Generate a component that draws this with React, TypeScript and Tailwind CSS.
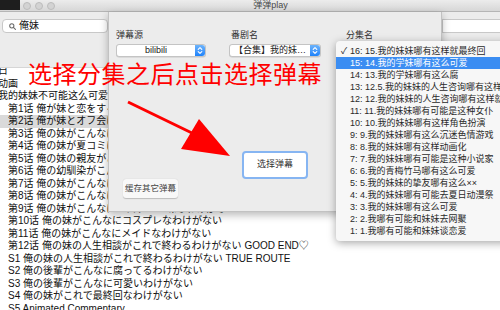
import React from "react";

const listRows: { text: string; indent?: boolean; selected?: boolean }[] = [
  { text: "日" },
  { text: "动画" },
  { text: "我的妹妹不可能这么可爱" },
  { text: "第1话 俺が妹と恋をするわけがない", indent: true },
  { text: "第2话 俺が妹とオフ会に行くわけがない", indent: true, selected: true },
  { text: "第3话 俺の妹がこんなに可愛いわけがない", indent: true },
  { text: "第4话 俺の妹が夏コミに行くわけがない", indent: true },
  { text: "第5话 俺の妹の親友がこんなに可愛いわけがない", indent: true },
  { text: "第6话 俺の幼馴染がこんなに可愛いわけがない", indent: true },
  { text: "第7话 俺の妹がこんなに小説家なわけがない", indent: true },
  { text: "第8话 俺の妹がこんなにアニメ化なわけがない", indent: true },
  { text: "第9话 俺の妹がこんなにエロゲー三昧なわけがない", indent: true },
  { text: "第10话 俺の妹がこんなにコスプレなわけがない", indent: true },
  { text: "第11话 俺の妹がこんなにメイドなわけがない", indent: true },
  { text: "第12话 俺の妹の人生相談がこれで終わるわけがない GOOD END♡", indent: true },
  { text: "S1 俺の妹の人生相談がこれで終わるわけがない TRUE ROUTE", indent: true },
  { text: "S2 俺の後輩がこんなに腐ってるわけがない", indent: true },
  { text: "S3 俺の後輩がこんなに可愛いわけがない", indent: true },
  { text: "S4 俺の妹がこれで最終回なわけがない", indent: true },
  { text: "S5 Animated Commentary", indent: true },
];

const episodes = [
  "16: 15.我的妹妹哪有这样就最终回",
  "15: 14.我的学妹哪有这么可爱",
  "14: 13.我的学妹哪有这么腐",
  "13: 12.5.我的妹妹的人生咨询哪有这样就结束",
  "12: 12.我的妹妹的人生咨询哪有这样就结束",
  "11: 11.我的妹妹哪有可能是这种女仆",
  "10: 10.我的妹妹哪有这样角色扮演",
  "9: 9.我的妹妹哪有这么沉迷色情游戏",
  "8: 8.我的妹妹哪有这样动画化",
  "7: 7.我的妹妹哪有可能是这种小说家",
  "6: 6.我的青梅竹马哪有这么可爱",
  "5: 5.我的妹妹的挚友哪有这么××",
  "4: 4.我的妹妹哪有可能去夏日动漫祭",
  "3: 3.我的妹妹哪有这么可爱",
  "2: 2.我哪有可能和妹妹去网聚",
  "1: 1.我哪有可能和妹妹谈恋爱",
];

function PopupButton({ label, width }: { label: string; width: string }) {
  return (
    <div className={`flex h-[13px] ${width} rounded-[3px] border border-[#c4c4c4] bg-white shadow-[0_0.5px_0.5px_rgba(0,0,0,0.15)]`}>
      <div className="flex-1 truncate text-center text-[9px] leading-[11px] text-[#222]">{label}</div>
      <div className="flex w-[10px] flex-col items-center justify-center rounded-r-[3px] bg-gradient-to-b from-[#6cb3fa] to-[#1a82fb]">
        <svg width="6" height="9" viewBox="0 0 6 9" fill="none" stroke="white" strokeWidth="1.1" strokeLinecap="round" strokeLinejoin="round">
          <path d="M1.2 3.4 L3 1.6 L4.8 3.4" />
          <path d="M1.2 5.6 L3 7.4 L4.8 5.6" />
        </svg>
      </div>
    </div>
  );
}

export default function App() {
  return (
    <div className="relative h-[310px] w-[500px] overflow-hidden bg-white font-['Liberation_Sans','Noto_Sans_CJK_JP',sans-serif]">
      {/* title bar */}
      <div className="flex h-[12px] border-b border-[#b5b5b5] bg-gradient-to-b from-[#ececec] to-[#d7d7d7]">
        <div className="h-[10px] w-[20px] bg-[#1e1e1e]" />
        <div className="flex items-center gap-[4px] pl-[3px]">
          <span className="h-[8px] w-[8px] rounded-full border border-[#bcbcbc] bg-[#d3d3d3]" />
          <span className="h-[8px] w-[8px] rounded-full border border-[#bcbcbc] bg-[#d3d3d3]" />
          <span className="h-[8px] w-[8px] rounded-full border border-[#bcbcbc] bg-[#d3d3d3]" />
        </div>
        <div className="flex-1 pr-[14px] text-center text-[9px] leading-[11px] text-[#4a4a4a] font-['Liberation_Sans','Noto_Sans_CJK_SC',sans-serif]">
          弹弹play
        </div>
      </div>

      {/* toolbar */}
      <div className="flex h-[55px] justify-between bg-[#ececec]">
        <div className="ml-[2px] mt-[7px] flex h-[14px] w-[106px] items-center gap-[3px] rounded-[4px] border border-[#c8c8c8] bg-white pl-[6px]">
          <svg width="7" height="7" viewBox="0 0 8 8" fill="none" stroke="#6b6b6b" strokeWidth="1.2">
            <circle cx="3.2" cy="3.2" r="2.4" />
            <path d="M5 5 L7.4 7.4" strokeLinecap="round" />
          </svg>
          <span className="text-[10px] leading-[12px] text-[#111]">俺妹</span>
        </div>
        <div className="mt-[7px] h-[14px] w-[58px] border-y border-l border-[#c8c8c8] bg-white" />
      </div>

      {/* list */}
      <div className="h-[243px] overflow-hidden border-t border-[#d6d6d6] bg-white">
        <div className="-mt-[3px]">
          {listRows.map((r, i) => (
            <div
              key={i}
              className={`h-[12.5px] whitespace-nowrap text-[10px] leading-[12.5px] text-[#111] ${r.indent ? "pl-[8px]" : "-ml-[2px]"} ${r.selected ? "bg-[#dadada]" : ""}`}
            >
              {r.text}
            </div>
          ))}
        </div>
      </div>

      {/* sheet */}
      <div className="absolute left-[108px] top-[12px] h-[200px] w-[334px] border-x border-b border-[#c2c2c2] bg-[#ececec] shadow-[0_3px_8px_rgba(0,0,0,0.28)] font-['Liberation_Sans','Noto_Sans_CJK_SC',sans-serif]">
        <div className="flex pl-[7px] pt-[16px]">
          <div className="w-[113px]">
            <div className="text-[9px] leading-[14px] text-[#333]">弹幕源</div>
            <div className="mt-[2px]">
              <PopupButton label="bilibili" width="w-[90px]" />
            </div>
          </div>
          <div className="w-[117px]">
            <div className="pl-[2px] text-[9px] leading-[14px] text-[#333]">番剧名</div>
            <div className="mt-[2px]">
              <PopupButton label="【合集】我的妹…" width="w-[92px]" />
            </div>
          </div>
          <div className="text-[9px] leading-[14px] text-[#333]">分集名</div>
        </div>
        <div className="flex flex-col items-start">
          <button className="ml-[133px] mt-[94px] flex h-[28px] w-[66px] items-center justify-center rounded-[4px] border-2 border-[#86b5f2] bg-white text-[9px] text-[#333]">
            选择弹幕
          </button>
          <button className="ml-[14px] flex h-[19px] w-[55px] items-center justify-center rounded-[3px] bg-[#f8f8f8] text-[8.5px] text-[#444] shadow-[0_0.5px_1px_rgba(0,0,0,0.2)]">
            缓存其它弹幕
          </button>
        </div>
      </div>

      {/* dropdown menu */}
      <div className="absolute left-[336px] top-[41px] w-[190px] rounded-[4px] bg-[#f7f7f7] py-[4px] shadow-[0_2px_8px_rgba(0,0,0,0.35)] font-['Liberation_Sans','Noto_Sans_CJK_SC',sans-serif]">
        {episodes.map((e, i) => (
          <div
            key={e}
            className={`relative h-[12px] whitespace-nowrap pl-[14px] text-[9px] leading-[12px] ${i === 1 ? "bg-[#3b8df2] text-white" : "text-[#2a2a2a]"}`}
          >
            {i === 0 && <span className="absolute left-[5px] top-0 text-[9px]">✓</span>}
            {e}
          </div>
        ))}
      </div>

      {/* annotation */}
      <div className="absolute left-[28px] top-[59px] whitespace-nowrap text-[24px] leading-[28px] tracking-[0.5px] text-[#ff0000] font-['Noto_Sans_CJK_SC',sans-serif]">
        选择分集之后点击选择弹幕
      </div>
      <svg className="pointer-events-none absolute left-0 top-0" width="500" height="310" viewBox="0 0 500 310">
        <path d="M128 102 L194 134" stroke="#ff0000" strokeWidth="3" />
        <path d="M199 119 L181 149 L230 156 Z" fill="#ff0000" />
      </svg>
    </div>
  );
}
